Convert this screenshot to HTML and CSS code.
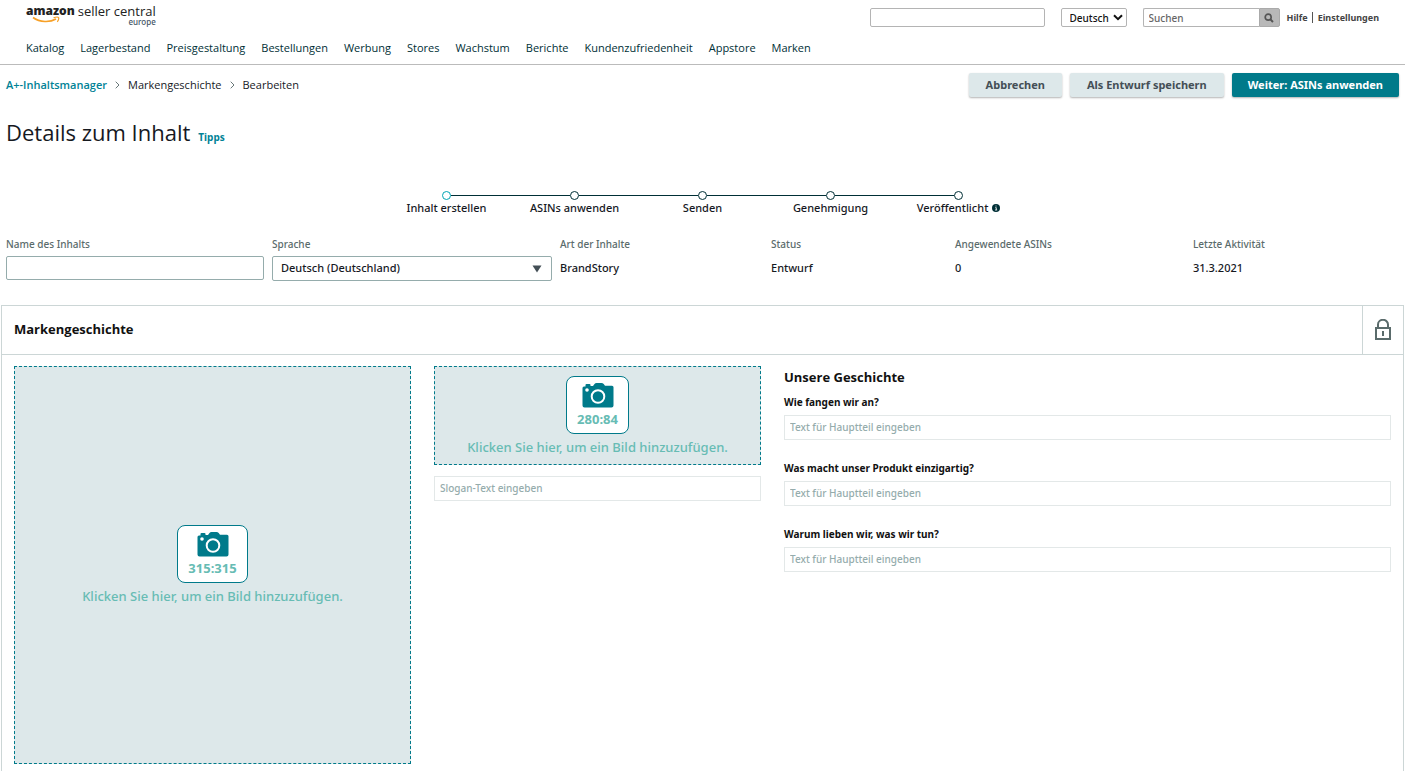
FILE: index.html
```html
<!DOCTYPE html>
<html lang="de">
<head>
<meta charset="utf-8">
<title>Details zum Inhalt</title>
<link rel="stylesheet" href="styles.css">
</head>
<body>
<header class="header">
  <div class="header-top">
    <a class="logo" href="#">
      <span class="logo-amazon">amazon</span>
      <span class="logo-seller">seller central</span>
      <span class="logo-region">europe</span>
      <svg class="logo-smile" viewBox="0 0 29 7" aria-hidden="true"><path d="M1 1.500C8 6.500 18 6.500 24 3" fill="none" stroke="#f7a027" stroke-width="1.600"/><path d="M21.500 1.800C24 1 26 .8 26.500 1.600C27 2.500 26.300 4.500 25.300 5.800" fill="none" stroke="#f7a027" stroke-width="1.200"/></svg>
    </a>
    <div class="tools">
      <input class="account" type="text" aria-label="Konto">
      <span class="lang">
        <select class="lang-select" aria-label="Sprache der Seite"><option>Deutsch</option></select>
        <svg class="lang-arrow" viewBox="0 0 10 7" aria-hidden="true"><path d="M1 1.200L5 5.200L9 1.200" fill="none" stroke="#111" stroke-width="2"/></svg>
      </span>
      <form class="search">
        <input class="search-input" type="text" placeholder="Suchen" aria-label="Suchen">
        <button class="search-button" type="button" aria-label="Suche starten"><svg viewBox="0 0 10 10" width="10" height="10"><circle cx="4.200" cy="4.200" r="3" fill="none" stroke="#555" stroke-width="1.700"/><path d="M6.400 6.400L9 9" stroke="#555" stroke-width="2"/></svg></button>
      </form>
      <div class="links"><a href="#">Hilfe</a><a href="#">Einstellungen</a></div>
    </div>
  </div>
  <nav class="nav">
    <a href="#">Katalog</a><a href="#">Lagerbestand</a><a href="#">Preisgestaltung</a><a href="#">Bestellungen</a><a href="#">Werbung</a><a href="#">Stores</a><a href="#">Wachstum</a><a href="#">Berichte</a><a href="#">Kundenzufriedenheit</a><a href="#">Appstore</a><a href="#">Marken</a>
  </nav>
</header>

<div class="bar">
  <nav class="crumbs">
    <a href="#">A+-Inhaltsmanager</a>
    <svg viewBox="0 0 5 8" width="5" height="8"><path d="M.7 .7L4 4L.7 7.300" fill="none" stroke="#687778"/></svg>
    <span>Markengeschichte</span>
    <svg viewBox="0 0 5 8" width="5" height="8"><path d="M.7 .7L4 4L.7 7.300" fill="none" stroke="#687778"/></svg>
    <span>Bearbeiten</span>
  </nav>
  <div class="actions">
    <button class="btn" type="button">Abbrechen</button>
    <button class="btn" type="button">Als Entwurf speichern</button>
    <button class="btn btn-primary" type="button">Weiter: ASINs anwenden</button>
  </div>
</div>

<div class="heading">
  <h1>Details zum Inhalt</h1>
  <a href="#">Tipps</a>
</div>

<ol class="steps">
  <li class="step step-current">Inhalt erstellen</li>
  <li class="step">ASINs anwenden</li>
  <li class="step">Senden</li>
  <li class="step">Genehmigung</li>
  <li class="step"><span class="step-label">Veröffentlicht <svg viewBox="0 0 8 8" width="8" height="8"><circle cx="4" cy="4" r="4" fill="#002f36"/><path d="M4 1.500V2.500M3.200 3.700H4.300V6M3 6H5.200" fill="none" stroke="#fff" stroke-width=".8"/></svg></span></li>
</ol>

<section class="meta">
  <div class="field">
    <label for="content-name">Name des Inhalts</label>
    <input class="meta-input" id="content-name" type="text">
  </div>
  <div class="field">
    <label for="content-lang">Sprache</label>
    <span class="meta-lang">
      <select class="meta-select" id="content-lang"><option>Deutsch (Deutschland)</option></select>
      <svg class="meta-arrow" viewBox="0 0 10 8" aria-hidden="true"><path d="M.5 .5H9.500L5 7.500Z" fill="#444f56"/></svg>
    </span>
  </div>
  <div class="field"><span class="field-name">Art der Inhalte</span><span class="field-value">BrandStory</span></div>
  <div class="field"><span class="field-name">Status</span><span class="field-value">Entwurf</span></div>
  <div class="field"><span class="field-name">Angewendete ASINs</span><span class="field-value">0</span></div>
  <div class="field"><span class="field-name">Letzte Aktivität</span><span class="field-value">31.3.2021</span></div>
</section>

<main class="panel">
  <div class="panel-head">
    <h2>Markengeschichte</h2>
    <div class="lock"><svg viewBox="0 0 16 21" width="16" height="21"><path d="M3 9V5.500A5 4.700 0 0 1 13 5.500V9" fill="none" stroke="#5a6b6b" stroke-width="2"/><path d="M1 9H15V20H1Z" fill="none" stroke="#5a6b6b" stroke-width="2"/><path d="M8 12V17" stroke="#5a6b6b" stroke-width="2"/></svg></div>
  </div>
  <div class="panel-body">
    <button class="drop drop-square" type="button">
      <span class="drop-badge">
        <svg viewBox="0 0 32 25" width="32" height="25"><path d="M2 3.500H3.500V2Q3.500 1 4.500 1H7.500Q8.500 1 8.500 2V3H11L12.500 1Q13.200 0 14.500 0H19.500Q20.800 0 21.700 1L23 2.800H30Q31.500 2.800 31.500 4.300V22.500Q31.500 24.500 29.500 24.500H2.500Q.5 24.500 .5 22.500V5Q.5 3.500 2 3.500Z" fill="#007a8a"/><circle cx="16" cy="13.500" r="6.300" fill="none" stroke="#fff" stroke-width="2"/><circle cx="5" cy="7" r="1.800" fill="#fff"/></svg>
        <span>315:315</span>
      </span>
      <span class="drop-text">Klicken Sie hier, um ein Bild hinzuzufügen.</span>
    </button>
    <div class="column">
      <button class="drop drop-wide" type="button">
        <span class="drop-badge">
          <svg viewBox="0 0 32 25" width="32" height="25"><path d="M2 3.500H3.500V2Q3.500 1 4.500 1H7.500Q8.500 1 8.500 2V3H11L12.500 1Q13.200 0 14.500 0H19.500Q20.800 0 21.700 1L23 2.800H30Q31.500 2.800 31.500 4.300V22.500Q31.500 24.500 29.500 24.500H2.500Q.5 24.500 .5 22.500V5Q.5 3.500 2 3.500Z" fill="#007a8a"/><circle cx="16" cy="13.500" r="6.300" fill="none" stroke="#fff" stroke-width="2"/><circle cx="5" cy="7" r="1.800" fill="#fff"/></svg>
          <span>280:84</span>
        </span>
        <span class="drop-text">Klicken Sie hier, um ein Bild hinzuzufügen.</span>
      </button>
      <input class="text-input" type="text" placeholder="Slogan-Text eingeben" aria-label="Slogan-Text">
    </div>
    <div class="story">
      <h3>Unsere Geschichte</h3>
      <div class="question"><label for="q1">Wie fangen wir an?</label><input class="text-input" id="q1" type="text" placeholder="Text für Hauptteil eingeben"></div>
      <div class="question"><label for="q2">Was macht unser Produkt einzigartig?</label><input class="text-input" id="q2" type="text" placeholder="Text für Hauptteil eingeben"></div>
      <div class="question"><label for="q3">Warum lieben wir, was wir tun?</label><input class="text-input" id="q3" type="text" placeholder="Text für Hauptteil eingeben"></div>
    </div>
  </div>
</main>
</body>
</html>
```
FILE: styles.css
```css
*, *::before, *::after { box-sizing: border-box; }
body {
  margin: 0;
  font: 500 11px/16px "Noto Sans", "Open Sans", sans-serif;
  color: #16191f;
  background: #fff;
}
a { color: #008296; text-decoration: none; }
h1, h2, h3 { margin: 0; }
input, select, button { font: inherit; color: inherit; margin: 0; }
svg { display: block; flex: none; }

.header { border-bottom: 1px solid #bbb; }
.header-top {
  display: flex;
  justify-content: space-between;
  padding: 4px 26px 0;
  height: 40px;
}
.logo {
  position: relative;
  display: grid;
  grid-template-columns: auto auto;
  column-gap: 3px;
  align-content: start;
  color: #222;
}
.logo-amazon { font: 800 12px/14px "Open Sans", sans-serif; }
.logo-seller { font: 400 13px/14px "Open Sans", sans-serif; }
.logo-region {
  grid-column: 1 / 3;
  justify-self: end;
  font-size: 8px;
  line-height: 8px;
  color: #456;
}
.logo-smile { position: absolute; left: 6px; top: 12px; width: 29px; height: 7px; }

.tools { display: flex; align-items: flex-start; padding-top: 4px; }
.account, .lang-select, .search-input {
  height: 19px;
  border: 1px solid #b4b4b4;
  border-radius: 2px;
  background: #fff;
  font-size: 10px;
  line-height: 16px;
}
.account { width: 175px; margin-right: 16px; }
.lang { position: relative; margin-right: 16px; }
.lang-select { display: block; appearance: none; width: 66px; padding: 0 8px; color: #111; }
.lang-arrow { position: absolute; right: 4px; top: 6px; width: 10px; height: 7px; pointer-events: none; }
.search { display: flex; margin-right: 7px; }
.search-input { width: 116px; padding: 0 5px; border-right: 0; border-radius: 2px 0 0 2px; }
.search-input::placeholder { color: #666; opacity: 1; }
.search-button {
  display: grid;
  place-items: center;
  width: 21px;
  height: 19px;
  padding: 0;
  border: 1px solid #aaa;
  border-radius: 0 2px 2px 0;
  background: #b8b8b8;
}
.links { display: flex; font-size: 9px; font-weight: 700; line-height: 11px; padding-top: 4px; }
.links a { color: #444; }
.links a + a { margin-left: 4px; padding-left: 5px; border-left: 1px solid #555; }

.nav, .crumbs { font-family: "Open Sans", sans-serif; }
.nav { display: flex; gap: 16px; padding: 0 26px 8px; }
.nav a { color: #002f36; }

.bar {
  display: flex;
  justify-content: space-between;
  align-items: center;
  padding: 8px 6px 0;
}
.crumbs { display: flex; align-items: center; gap: 8px; }
.crumbs a { font-weight: 600; }
.actions { display: flex; gap: 8px; }
.btn {
  height: 24px;
  padding: 0 17px;
  border: 0;
  border-radius: 2px;
  background: #dde8ea;
  box-shadow: 0 1px 2px rgba(0, 0, 0, .3);
  color: #444f56;
  font-weight: 700;
}
.btn-primary { padding: 0 16px; background: #007a8a; color: #fff; }

.heading { display: flex; align-items: baseline; gap: 8px; padding: 19px 6px 0; }
.heading h1 { font: 400 22px/32px "Open Sans", sans-serif; }
.heading a { font-size: 10px; font-weight: 700; }

.steps {
  display: flex;
  justify-content: center;
  list-style: none;
  margin: 0;
  padding: 43px 0 0;
}
.step { position: relative; width: 128px; padding-top: 9px; text-align: center; }
.step::before {
  content: "";
  position: absolute;
  left: 59px;
  top: 0;
  width: 9px;
  height: 9px;
  border: 1px solid #002f36;
  border-radius: 50%;
}
.step:not(:last-child)::after {
  content: "";
  position: absolute;
  left: 68px;
  top: 4px;
  width: 119px;
  height: 1px;
  background: #002f36;
}
.step-current::before { border-color: #00a4b4; }
.step-label { display: flex; justify-content: center; align-items: center; gap: 4px; }

.meta {
  display: grid;
  grid-template-columns: 258fr 280fr 203fr 176fr 230fr 206fr;
  column-gap: 8px;
  padding: 20px 6px 0;
}
.field { display: flex; flex-direction: column; }
.field label, .field-name { color: #5a6b6b; font-size: 10px; line-height: 16px; }
.field-value { padding-top: 8px; }
.meta-input, .meta-select {
  display: block;
  width: 100%;
  height: 24px;
  border: 1px solid #95acac;
  border-radius: 2px;
  background: #fff;
}
.meta-input { margin-top: 4px; }
.meta-lang { position: relative; margin-top: 4px; }
.meta-select { appearance: none; height: 25px; padding: 0 8px 2px; }
.meta-arrow { position: absolute; right: 10px; top: 9px; width: 10px; height: 8px; pointer-events: none; }

.panel { margin: 24px 1px 0; border: 1px solid #ccd6d6; border-bottom: 0; }
.panel-head {
  display: flex;
  justify-content: space-between;
  height: 49px;
  border-bottom: 1px solid #ccd6d6;
}
.panel-head h2 { padding-left: 12px; font-size: 13px; line-height: 47px; font-weight: 700; color: #111; }
.lock { display: grid; place-items: center; width: 41px; padding-bottom: 1px; border-left: 1px solid #ccd6d6; }
.panel-body {
  display: grid;
  grid-template-columns: 397fr 327fr 607fr;
  column-gap: 23px;
  align-items: start;
  padding: 11px 12px 7px;
}
.panel-head h2, .story h3 { font-family: "Open Sans", sans-serif; }
.drop {
  display: flex;
  flex-direction: column;
  align-items: center;
  justify-content: center;
  gap: 4px;
  width: 100%;
  padding: 0;
  border: 1px dashed #007a8a;
  background: #dde8ea;
  color: #67bcb4;
}
.drop-square { aspect-ratio: 397 / 398; }
.drop-wide { height: 99px; }
.drop-badge {
  display: flex;
  flex-direction: column;
  align-items: center;
  gap: 2px;
  padding: 6px 10px 5px;
  border: 1px solid #007a8a;
  border-radius: 8px;
  background: #fff;
  font-size: 13px;
  line-height: 18px;
  font-weight: 700;
}
.drop-text { font-size: 13px; line-height: 18px; }
.column { display: flex; flex-direction: column; gap: 11px; }
.text-input {
  display: block;
  width: 100%;
  height: 25px;
  padding: 0 5px 2px;
  border: 1px solid #e3e8e8;
  background: #fff;
  font-size: 10px;
}
.text-input::placeholder { color: #95acac; opacity: 1; }
.story h3 { padding-top: 2px; font-size: 13px; line-height: 18px; font-weight: 700; color: #111; }
.question { padding-top: 8px; margin-bottom: 17px; }
.question label { display: block; margin-bottom: 5px; font-size: 10px; line-height: 16px; font-weight: 700; color: #111; }
.question + .question { padding-top: 3px; }
```
